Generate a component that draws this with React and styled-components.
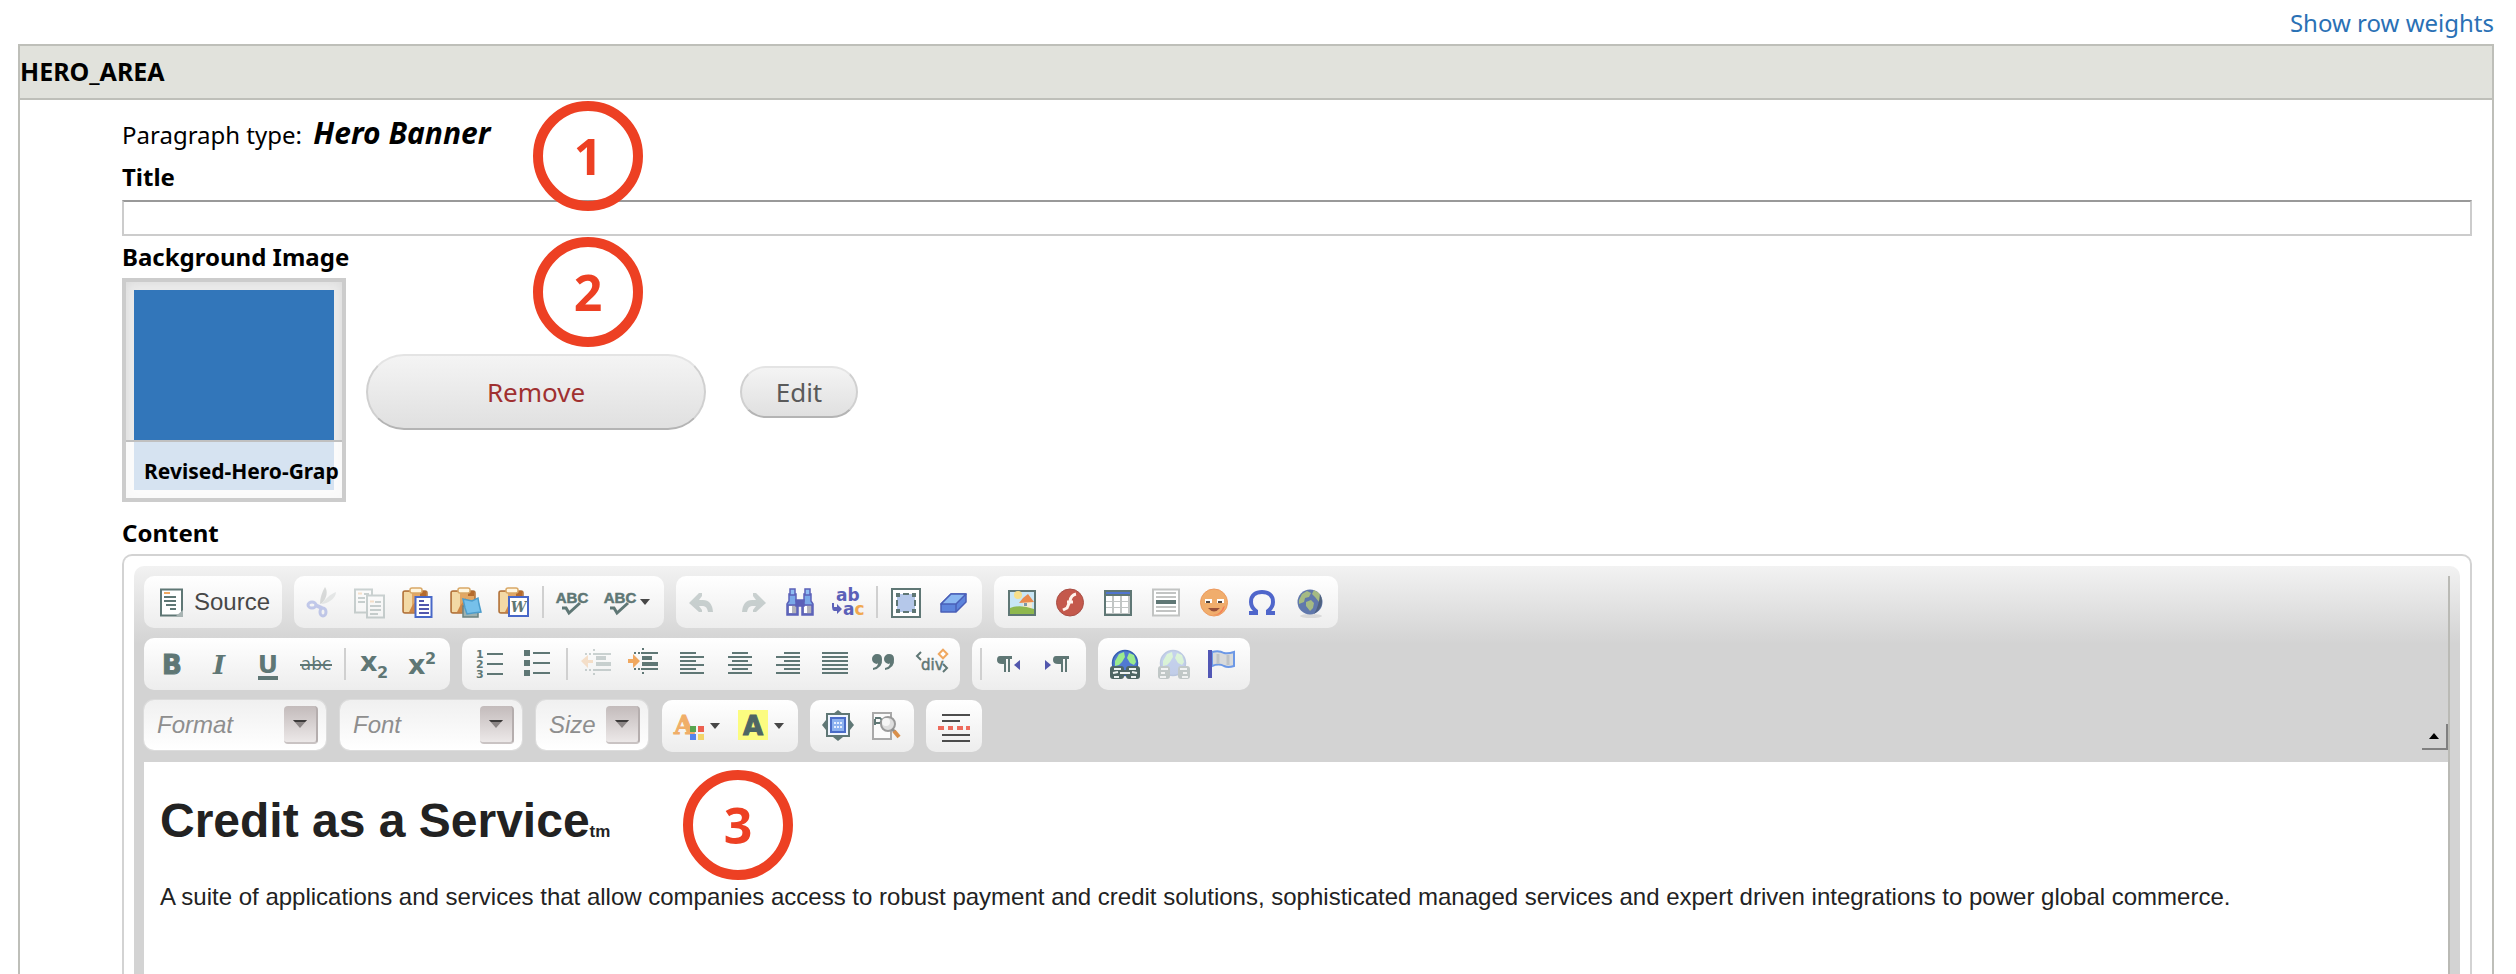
import React from "react";
import styled, { createGlobalStyle } from "styled-components";

const GlobalStyle = createGlobalStyle`
  *, *::before, *::after { box-sizing: border-box; }
  body {
    margin: 0;
    background: #fff;
    color: #000;
    font-family: "Noto Sans", "Open Sans", sans-serif;
    font-size: 24px;
  }
`;

const Page = styled.main`
  display: flex;
  flex-direction: column;
  min-height: 100vh;
  padding: 0 22px 0 18px;
`;

const TopLinks = styled.div`
  display: flex;
  justify-content: flex-end;
  height: 44px;
  line-height: 46px;
`;

const WeightLink = styled.a`
  color: #2a71b5;
  text-decoration: none;
`;

const Panel = styled.section`
  flex: 1;
  display: flex;
  flex-direction: column;
  border: 2px solid #bebfb9;
  border-bottom: 0;
`;

const PanelTitle = styled.h2`
  margin: 0;
  height: 54px;
  border-bottom: 2px solid #bebfb9;
  background: #e1e2dc;
  font-size: 25px;
  line-height: 50px;
`;

const PanelBody = styled.div`
  position: relative;
  flex: 1;
  display: flex;
  flex-direction: column;
  padding: 14px 20px 0 102px;
`;

const TypeLine = styled.div`
  height: 42px;
  line-height: 42px;

  em {
    margin-left: 5px;
    font-size: 30px;
    font-weight: 700;
    line-height: 30px;
  }
`;

const Label = styled.label`
  display: block;
  font-weight: 700;
  line-height: 42px;
`;

const TextInput = styled.input`
  display: block;
  width: 100%;
  height: 36px;
  margin-top: 2px;
  border: 2px solid #ccc;
  border-top-color: #999;
  padding: 0 6px;
  background: #fff;
  font: inherit;
`;

const MediaRow = styled.div`
  display: flex;
  align-items: center;
`;

const Thumbnail = styled.figure`
  display: grid;
  width: 224px;
  height: 224px;
  margin: 0 20px 0 0;
  border: 4px solid #ccc;
  background: #ececec;
  box-shadow: inset 0 0 12px #d8d8d8;
  overflow: hidden;
`;

const ThumbImage = styled.div`
  grid-area: 1 / 1;
  margin: 8px;
  background: #3276ba;
`;

const ThumbCaption = styled.figcaption`
  grid-area: 1 / 1;
  align-self: end;
  height: 58px;
  min-width: 0;
  border-top: 2px solid #c0c0c0;
  padding-left: 18px;
  background: rgba(255, 255, 255, 0.8);
  font-size: 21px;
  font-weight: 700;
  line-height: 58px;
  white-space: nowrap;
  overflow: hidden;
`;

const PillButton = styled.button`
  width: ${(p) => (p.$large ? 340 : 118)}px;
  height: ${(p) => (p.$large ? 76 : 52)}px;
  margin: 4px 34px 0 0;
  border: 2px solid #d0d0d0;
  border-top-color: #e4e4e4;
  border-bottom-color: #b4b4b4;
  border-radius: 38px;
  padding: 0;
  background: linear-gradient(#f4f4f4, #e0e0e0);
  color: ${(p) => (p.$danger ? "#a03030" : "#5a5a5a")};
  font: 26px "Noto Sans", "Open Sans", sans-serif;
`;

const Step = styled.span`
  position: absolute;
  left: ${(p) => p.$left}px;
  top: ${(p) => p.$top}px;
  display: flex;
  align-items: center;
  justify-content: center;
  width: 110px;
  height: 110px;
  border: 10px solid #ed4023;
  border-radius: 50%;
  color: #ed4023;
  font: 700 50px "Open Sans", "Noto Sans", sans-serif;
`;

const ContentField = styled.div`
  flex: 1;
  display: flex;
  flex-direction: column;
  margin-top: 10px;
`;

const EditorFrame = styled.div`
  flex: 1;
  display: flex;
  border: 2px solid #d3d3d3;
  border-bottom: 0;
  border-radius: 10px 10px 0 0;
  padding: 10px 10px 0;
  font-family: "Liberation Sans", Arial, sans-serif;
`;

const EditorSkin = styled.div`
  flex: 1;
  display: flex;
  border-radius: 10px 10px 0 0;
  padding: 10px 10px 0;
  background: linear-gradient(#f2f2f2, #d3d3d3 78px);
`;

const EditorInner = styled.div`
  flex: 1;
  display: flex;
  flex-direction: column;
  border-right: 2px solid #babab5;
`;

const ToolArea = styled.div`
  display: flex;
  justify-content: space-between;
  align-items: flex-end;
  padding-bottom: 10px;
`;

const ToolRows = styled.div`
  display: grid;
  gap: 10px;
`;

const ToolRow = styled.div`
  display: flex;
  gap: 12px;
`;

const ToolGroup = styled.div`
  display: flex;
  align-items: center;
  height: 52px;
  border-radius: 10px;
  padding: 0 4px;
  background: linear-gradient(#fff, #ededed);
`;

const ToolButton = styled.button`
  display: flex;
  align-items: center;
  gap: ${(p) => (p.$labelled ? 6 : 4)}px;
  height: 44px;
  border: 0;
  padding: 0 8px;
  background: none;
  color: #474747;
  font: 24px "Liberation Sans", Arial, sans-serif;
  opacity: ${(p) => (p.disabled ? 0.3 : 1)};

  svg { display: block; overflow: visible; }
`;

const Divider = styled.span`
  width: 2px;
  height: 32px;
  margin: 0 4px;
  background: #d0d0d0;
`;

const Combos = styled.div`
  display: flex;
  gap: 14px;
  margin-right: 2px;
`;

const ComboBox = styled.div`
  display: grid;
  align-items: center;
  width: ${(p) => p.$width}px;
  height: 50px;
  border-radius: 10px;
  background: linear-gradient(#f0f0f0, #fff);
  box-shadow: 0 0 0 1px #dcdcdc;
`;

const ComboSelect = styled.select`
  grid-area: 1 / 1;
  width: 100%;
  height: 50px;
  appearance: none;
  border: 0;
  padding: 0 0 2px 13px;
  background: none;
  color: #8e8e8e;
  font: italic 24px "Liberation Sans", Arial, sans-serif;
`;

const ComboArrow = styled.span`
  grid-area: 1 / 1;
  justify-self: end;
  display: grid;
  place-items: center;
  width: 34px;
  height: 38px;
  margin-right: 8px;
  border-right: 2px solid #b5aeae;
  border-bottom: 2px solid #c9c3c3;
  border-radius: 4px;
  background: linear-gradient(#c3bbbb, #ece8e8);
  pointer-events: none;
`;

const Collapser = styled.button`
  display: grid;
  place-items: center;
  width: 26px;
  height: 26px;
  margin-bottom: 2px;
  border: 0;
  border-right: 2px solid #808080;
  border-bottom: 2px solid #808080;
  padding: 0;
  background: none;
`;

const Document = styled.article`
  position: relative;
  flex: 1;
  padding: 30px 16px 0;
  background: #fff;
  color: #222;
`;

const DocTitle = styled.h1`
  margin: 0;
  font-size: 48px;
  line-height: 58px;

  small { font-size: 17px; }
`;

const DocText = styled.p`
  margin: 18px 0 0;
  font-size: 24px;
  line-height: 36px;
`;

const INK = "#5f7775";
const SERIF = "DejaVu Serif, serif";
const SANS = "DejaVu Sans, sans-serif";

const Clipboard = () => (
  <g>
    <rect x="1" y="5" width="24" height="22" rx="2" fill="#e2a764" stroke="#b0723a" strokeWidth="1.5" />
    <path d="M2 6h8v20H2z" fill="#f3d9a5" />
    <path d="M10 20l6-8v14h-9z" fill="#cf8646" />
    <rect x="18" y="5" width="6" height="5" fill="#b56a2c" />
    <rect x="8" y="2" width="12" height="5" rx="2" fill="#fff6e0" stroke="#d9a866" strokeWidth="1.5" />
  </g>
);

const Caret = () => <path d="M0 0h10l-5 6z" fill="#474747" />;

const Lines = ({ rows, color = INK }) =>
  rows.map(([x1, x2, y, w = 2]) => (
    <rect key={`${x1}-${y}`} x={x1} y={y} width={x2 - x1} height={w} fill={color} />
  ));

const LinkedGlobe = ({ broken }) => (
  <g>
    <circle cx="15" cy="15" r="12.5" fill="#5079d2" stroke="#355fae" strokeWidth="1.5" />
    <path d="M5 13l4-7 5-2 1 5-3 5-3 3-4 1zM19 5l5 2 2 7-2 3-4-2-3-5z" fill="#9bea8e" />
    <rect x="0" y="18" width={broken ? 12 : 14} height="13" rx="3" fill="#4f6664" />
    <rect x={broken ? 20 : 16} y="18" width={broken ? 12 : 14} height="13" rx="3" fill="#4f6664" />
    {!broken && <rect x="8" y="22" width="14" height="5" fill="#4f6664" />}
    <path
      d={broken ? "M3 21h7M3 25h4M2 29h6M22 21h7M25 25h4M24 29h6" : "M4 21h7M19 21h7M3 25l5-1M22 24l5 1M10 25h10M4 29h5M21 29h5"}
      stroke="#eef2f1"
      strokeWidth="2"
    />
  </g>
);

const ICONS = {
  source: (
    <g>
      <rect x="5" y="3.5" width="21" height="26" fill="#fff" stroke={INK} strokeWidth="2" />
      <path d="M27 24v6h-7z" fill="#a8b4b3" />
      <Lines rows={[[8, 20, 10], [8, 20, 14], [10, 20, 18], [14, 20, 22]]} />
      <rect x="8" y="6" width="6" height="2" fill="#f0a860" />
    </g>
  ),
  cut: (
    <g fill="none">
      <path d="M19 1c3 4 2 11-3 16l-2 1c0-6 2-12 5-17z" fill="#8c9290" />
      <path d="M30 6c0 6-8 12-15 12 4-4 9-10 15-12z" fill="#b9c0be" />
      <ellipse cx="6" cy="19" rx="4" ry="3" stroke="#4b63d0" strokeWidth="3" />
      <ellipse cx="17" cy="26" rx="3" ry="4" stroke="#4b63d0" strokeWidth="3" />
      <path d="M9 19l7 3" stroke="#4b63d0" strokeWidth="4" />
    </g>
  ),
  copy: (
    <g fill="#fff" stroke={INK} strokeWidth="2">
      <rect x="1" y="3.5" width="17" height="23" />
      <path d="M4 12h7M4 16h7M10 8h5" />
      <rect x="13" y="9.5" width="17" height="22" />
      <path d="M21 16h6M16 20h11M16 24h11M16 28h8" />
      <path d="M4 7.5h4M16 15.5h4" stroke="#f0a860" />
    </g>
  ),
  paste: (
    <g>
      <Clipboard />
      <rect x="13.5" y="11" width="16" height="20" fill="#fff" stroke="#4868c8" strokeWidth="2" />
      <Lines color="#5257ad" rows={[[17, 22, 14], [17, 27, 18], [17, 27, 22], [17, 27, 26]]} />
    </g>
  ),
  pasteText: (
    <g>
      <Clipboard />
      <path d="M13 20h15v11H13z" fill="#9fb2b0" stroke="#6c8280" strokeWidth="1.5" />
      <path d="M13 13l9 2 6-3 1 6 2 8-8 1-6 1-2-6z" fill="#76c0ea" stroke="#4d9dcc" strokeWidth="1.5" />
    </g>
  ),
  pasteWord: (
    <g>
      <Clipboard />
      <rect x="11" y="11" width="19" height="19" fill="#fff" stroke="#4868c8" strokeWidth="2" />
      <text x="20.5" y="26" textAnchor="middle" fontFamily={SERIF} fontSize="14" fontWeight="700" fontStyle="italic" fill={INK}>W</text>
    </g>
  ),
  spell: (
    <g>
      <text x="16" y="17" textAnchor="middle" fontFamily="Liberation Sans, sans-serif" fontSize="15" fontWeight="700" fill={INK} stroke={INK} strokeWidth="0.5">ABC</text>
      <path d="M6 22h4l3 5L24 17" fill="none" stroke={INK} strokeWidth="3" />
    </g>
  ),
  undo: (
    <path d="M1 17L11 7h3v3l-3 4h4q9 0 10 12h-5q-1-6-5-6h-4l3 4v2h-3z" fill={INK} />
  ),
  redo: (
    <path d="M30 17L20 7h-3v3l3 4h-4Q7 14 6 26h5q1-6 5-6h4l-3 4v2h3z" fill={INK} />
  ),
  find: (
    <g stroke="#5b60b8" strokeWidth="1.5">
      <path d="M5 8h7v7l2 3v11H3V18l2-3zM20 8h7v7l2 3v11H18V18l2-3z" fill="#7aa8e8" />
      <path d="M4 19h9v9H4zM19 19h9v9h-9z" fill="#b4b4bd" />
      <path d="M5 20h3v7H5zM20 20h3v7h-3z" fill="#fff" stroke="none" />
      <rect x="6" y="3" width="5" height="6" fill="#8fbcf2" />
      <rect x="21" y="3" width="5" height="6" fill="#8fbcf2" />
      <rect x="12" y="14" width="8" height="6" fill="#5b60b8" />
    </g>
  ),
  replace: (
    <g fontFamily={SANS} fontSize="17" fontWeight="700" fill="#5b60b8">
      <text x="4" y="15">ab</text>
      <text x="11" y="29">a<tspan fill="#f0a850">c</tspan></text>
      <path d="M0 17h2v4h3v-3l5 5-5 5v-3H2q-2-1-2-4z" />
    </g>
  ),
  selectAll: (
    <g>
      <rect x="2" y="3" width="28" height="28" fill="#fff" stroke={INK} strokeWidth="2" />
      <rect x="7" y="8" width="18" height="18" fill="#b5c8ea" />
      <path d="M6 7h4v4H6zM22 7h4v4h-4zM6 23h4v4H6zM22 23h4v4h-4zM13 7h6v2h-6zM13 25h6v2h-6zM6 14h2v6H6zM24 14h2v6h-2z" fill={INK} />
    </g>
  ),
  eraser: (
    <g stroke="#4a5fb8" strokeWidth="1.5" strokeLinejoin="round">
      <path d="M3 18L13 8h15v8L18 26H3z" fill="#5d84dc" />
      <path d="M3 18L13 8h15L18 18z" fill="#8bb8f2" />
      <path d="M18 18v8" />
    </g>
  ),
  image: (
    <g>
      <rect x="3" y="5" width="26" height="24" fill="#c8e6f5" stroke={INK} strokeWidth="2" />
      <circle cx="12" cy="9" r="4" fill="#f7e08a" />
      <rect x="17" y="16" width="9" height="7" fill="#f5ead0" />
      <path d="M13 17l4-5 5-4 6 8z" fill="#e9894c" />
      <path d="M4 22q10-4 24 1v5H4z" fill="#8fb84e" />
      <rect x="18" y="17" width="3" height="3" fill="#7d97a8" />
    </g>
  ),
  flash: (
    <g>
      <circle cx="16" cy="16.5" r="13.5" fill="#c4594c" stroke="#a84d44" />
      <path d="M22 8q-5 1-6 7l-3 7-4 2M13 16h6" fill="none" stroke="#fff3ec" strokeWidth="3" />
    </g>
  ),
  table: (
    <g>
      <rect x="2" y="4" width="28" height="26" fill={INK} />
      <rect x="4" y="6" width="24" height="2" fill="#5075d0" />
      <rect x="4" y="10" width="24" height="18" fill="#c2c6c5" />
      {[10, 16, 22].map((y) =>
        [4, 12, 20].map((x) => <rect key={`${x}-${y}`} x={x} y={y} width="6" height="5" fill="#fff" />)
      )}
    </g>
  ),
  rule: (
    <g>
      <rect x="3" y="3.5" width="26" height="26" fill="#fff" stroke="#c2c4c3" strokeWidth="2" />
      <Lines color="#c2c4c3" rows={[[6, 26, 6], [6, 26, 10], [6, 26, 20], [6, 26, 24]]} />
      <rect x="6" y="14" width="20" height="4" fill={INK} />
    </g>
  ),
  smiley: (
    <g>
      <circle cx="16" cy="16.5" r="13.5" fill="#f0ad6c" stroke="#ed9a5e" />
      <path d="M27 20q-3 10-12 9 8-1 10-8z" fill="#f57c58" />
      <path d="M7 13h7v4H7zM19 13h7v4h-7z" fill="#fff" />
      <path d="M8 15h4v2H8zM20 15h4v2h-4z" fill="#4d4340" />
      <path d="M10 22q6 7 12 0z" fill="#98503a" />
    </g>
  ),
  omega: (
    <path d="M3 27h7v-2C6 22 5 19 5 16 5 9 10 6 16 6s11 3 11 10c0 3-1 6-5 9v2h7" fill="none" stroke="#4f66cb" strokeWidth="4" />
  ),
  globe: (
    <g>
      <ellipse cx="17" cy="30" rx="11" ry="2" fill="#d9d9d9" />
      <circle cx="16" cy="16" r="12.5" fill="#6078ac" />
      <path d="M8 8l5-3 4 2-2 4-4 1-1 4-5 2 0-4zM20 4l5 3 3 7-3 2-4-5-3-3zM12 16l5-2 3 3-1 5-3 3-4-5z" fill="#a5ba83" />
      <path d="M26 8q6 12-6 20 5-8 6-20z" fill="#4f6180" />
    </g>
  ),
  bold: (
    <text x="16" y="26" textAnchor="middle" fontFamily={SANS} fontSize="26" fontWeight="700" fill={INK} stroke={INK}>B</text>
  ),
  italic: (
    <text x="15" y="26" textAnchor="middle" fontFamily={SERIF} fontSize="26" fontWeight="700" fontStyle="italic" fill={INK}>I</text>
  ),
  underline: (
    <g fill={INK}>
      <text x="16" y="25" textAnchor="middle" fontFamily={SANS} fontSize="25" fontWeight="700">U</text>
      <rect x="6" y="28" width="20" height="4" />
    </g>
  ),
  strike: (
    <g fill={INK}>
      <text x="16" y="22" textAnchor="middle" fontFamily={SANS} fontSize="17">abc</text>
      <rect x="0" y="16" width="32" height="2" />
    </g>
  ),
  sub: (
    <g fill={INK} fontFamily={SANS} fontWeight="700">
      <text x="2" y="23" fontSize="27">x</text>
      <text x="19" y="30" fontSize="16">2</text>
    </g>
  ),
  sup: (
    <g fill={INK} fontFamily={SANS} fontWeight="700">
      <text x="2" y="26" fontSize="27">x</text>
      <text x="19" y="16" fontSize="16">2</text>
    </g>
  ),
  numbered: (
    <g fill={INK}>
      <Lines rows={[[13, 29, 5], [13, 29, 15], [13, 29, 25]]} />
      <g fontFamily={SANS} fontSize="11" fontWeight="700">
        <text x="2" y="10">1</text>
        <text x="2" y="20">2</text>
        <text x="2" y="30">3</text>
      </g>
    </g>
  ),
  bulleted: (
    <g fill={INK}>
      <path d="M2 2h6v6H2zM2 12h6v6H2zM2 22h6v6H2z" />
      <Lines rows={[[11, 28, 4], [11, 28, 14], [11, 28, 24]]} />
    </g>
  ),
  outdent: (
    <g>
      <Lines rows={[[5, 7, 5], [9, 11, 5], [13, 31, 5], [16, 26, 8, 4], [16, 31, 14, 4], [5, 7, 21], [9, 11, 21], [13, 31, 21], [13, 15, 1], [13, 15, 25]]} />
      <path d="M1 13l7-6v5h5v3H8v5z" fill="#f0a860" />
    </g>
  ),
  indent: (
    <g>
      <Lines rows={[[6, 8, 4], [10, 12, 4], [13, 30, 4], [14, 24, 8, 4], [14, 30, 14, 4], [6, 8, 20], [10, 12, 20], [13, 30, 20], [14, 16, 0], [14, 16, 24]]} />
      <path d="M12 13L5 6v5H0v4h5v5z" fill="#f0a860" />
    </g>
  ),
  left: <Lines rows={[[4, 20, 4], [4, 28, 8], [4, 20, 12], [4, 28, 16], [4, 20, 20], [4, 28, 24]]} />,
  center: <Lines rows={[[8, 24, 4], [4, 28, 8], [8, 24, 12], [4, 28, 16], [8, 24, 20], [4, 28, 24]]} />,
  right: <Lines rows={[[12, 28, 4], [4, 28, 8], [12, 28, 12], [4, 28, 16], [12, 28, 20], [4, 28, 24]]} />,
  justify: <Lines rows={[[2, 28, 4], [2, 28, 8], [2, 28, 12], [2, 28, 16], [2, 28, 20], [2, 28, 24]]} />,
  quote: (
    <path d="M9 6a5 5 0 1 0 0 10l1-1q0 4-5 5v2q10-2 9-11 0-5-5-5zM21 6a5 5 0 1 0 0 10l1-1q0 4-5 5v2q10-2 9-11 0-5-5-5z" fill={INK} />
  ),
  div: (
    <g>
      <path d="M5 4L1 8l4 4M27 16l4 4-4 4" fill="none" stroke={INK} strokeWidth="2" />
      <text x="5" y="22" fontFamily={SANS} fontSize="15" fill={INK} stroke={INK} strokeWidth="0.5">div</text>
      <rect x="24" y="3" width="6" height="6" transform="rotate(45 27 6)" fill="#fff" stroke="#f0a860" strokeWidth="2" />
    </g>
  ),
  ltr: (
    <g>
      <path d="M6 8h12v3h-2v13h-2V11h-2v13h-2v-8H8q-5 0-5-4t3-4z" fill={INK} />
      <path d="M26 12v10l-6-5z" fill="#5257ad" />
    </g>
  ),
  rtl: (
    <g>
      <path d="M14 8h13v3h-2v13h-2V11h-2v13h-2v-8h-3q-5 0-5-4t3-4z" fill={INK} />
      <path d="M3 12v10l6-5z" fill="#5257ad" />
    </g>
  ),
  link: <LinkedGlobe />,
  unlink: <LinkedGlobe broken />,
  anchor: (
    <g>
      <path d="M6 4q7-2 12 1 4 1 10-1v14q-6 2-10 0-5-3-12 0z" fill="#d8dadb" stroke="#6c98e6" strokeWidth="2" />
      <path d="M12 6v10M22 7v10" stroke="#bfc3c6" strokeWidth="3" />
      <rect x="2" y="2" width="4" height="28" fill="#5257b5" />
    </g>
  ),
  textColor: (
    <g>
      <text x="10" y="24" textAnchor="middle" fontFamily={SERIF} fontSize="26" fontWeight="700" fill="#f0ae68" stroke="#f0ae68">A</text>
      <rect x="16" y="16" width="6" height="6" fill="#58a550" />
      <rect x="24" y="16" width="6" height="6" fill="#ec6050" />
      <rect x="16" y="24" width="6" height="6" fill="#5584ec" />
      <rect x="24" y="24" width="6" height="6" fill="#f2d56a" />
    </g>
  ),
  highlight: (
    <g>
      <rect x="0" y="0" width="30" height="30" fill="#fcfc80" />
      <text x="15" y="25" textAnchor="middle" fontFamily={SANS} fontSize="26" fontWeight="700" fill="#4e6664" stroke="#4e6664">A</text>
    </g>
  ),
  maximize: (
    <g>
      <path d="M16 0l5 4H11zM16 31l5-4H11zM0 15l4-5v10zM32 15l-4-5v10z" fill={INK} />
      <rect x="5" y="4" width="22" height="22" fill="#eef4ff" stroke={INK} strokeWidth="2" />
      <rect x="9" y="8" width="14" height="14" fill="#8db2f0" stroke="#4a6cc8" strokeWidth="2" />
      <path d="M12 12h2v2h-2zM15 12h2v2h-2zM18 12h2v2h-2zM12 16h2v2h-2zM15 16h2v2h-2zM18 16h2v2h-2z" fill="#e4eeff" />
    </g>
  ),
  preview: (
    <g>
      <rect x="3" y="3" width="18" height="26" fill="#fbfbfb" stroke="#a9a9a9" strokeWidth="2" />
      <path d="M5 9v6M5 8h5q3 2 0 5H6" fill="none" stroke={INK} strokeWidth="2" />
      <circle cx="18" cy="14" r="7" fill="#dedede" stroke="#9a9a9a" strokeWidth="2" />
      <circle cx="16" cy="12" r="4" fill="#f6f6f6" />
      <path d="M22 19l3 3" stroke="#8f8f8f" strokeWidth="3" />
      <path d="M24 21l5 6" stroke="#d98f4a" strokeWidth="4" />
    </g>
  ),
  pageBreak: (
    <g>
      <Lines color="#4c4c4c" rows={[[4, 32, 4], [4, 22, 10], [4, 32, 24], [4, 32, 30]]} />
      <Lines color="#ee6a5c" rows={[[0, 6, 16, 4], [10, 15, 16, 4], [19, 25, 16, 4], [28, 32, 16, 4]]} />
    </g>
  ),
};

const TOP_ROW = [
  [["source", "Source", { text: true }]],
  [
    ["cut", "Cut", { off: true }],
    ["copy", "Copy", { off: true }],
    ["paste", "Paste"],
    ["pasteText", "Paste as plain text"],
    ["pasteWord", "Paste from Word"],
    null,
    ["spell", "Check spelling"],
    ["spell", "Spell check as you type", { menu: true }],
  ],
  [
    ["undo", "Undo", { off: true }],
    ["redo", "Redo", { off: true }],
    ["find", "Find"],
    ["replace", "Replace"],
    null,
    ["selectAll", "Select all"],
    ["eraser", "Remove format"],
  ],
  [
    ["image", "Image"],
    ["flash", "Flash"],
    ["table", "Table"],
    ["rule", "Horizontal line"],
    ["smiley", "Smiley"],
    ["omega", "Special character"],
    ["globe", "IFrame"],
  ],
];

const MIDDLE_ROW = [
  [
    ["bold", "Bold"],
    ["italic", "Italic"],
    ["underline", "Underline"],
    ["strike", "Strike through"],
    null,
    ["sub", "Subscript"],
    ["sup", "Superscript"],
  ],
  [
    ["numbered", "Numbered list"],
    ["bulleted", "Bulleted list"],
    null,
    ["outdent", "Decrease indent", { off: true }],
    ["indent", "Increase indent"],
    ["left", "Align left"],
    ["center", "Center"],
    ["right", "Align right"],
    ["justify", "Justify"],
    ["quote", "Block quote"],
    ["div", "Create div container"],
  ],
  [null, ["ltr", "Left to right"], ["rtl", "Right to left"]],
  [
    ["link", "Link"],
    ["unlink", "Unlink", { off: true }],
    ["anchor", "Anchor"],
  ],
];

const BOTTOM_ROW = [
  [
    ["textColor", "Text color", { menu: true }],
    ["highlight", "Background color", { menu: true }],
  ],
  [
    ["maximize", "Maximize"],
    ["preview", "Show blocks"],
  ],
  [["pageBreak", "Insert page break"]],
];

const COMBOS = [
  ["Format", 182],
  ["Font", 182],
  ["Size", 112],
];

function Tool({ icon, label, text, menu, off }) {
  return (
    <ToolButton type="button" aria-label={label} disabled={off} $labelled={text}>
      <svg width="32" height="32" viewBox="0 0 32 32" aria-hidden="true">
        {ICONS[icon]}
      </svg>
      {text && label}
      {menu && (
        <svg width="12" height="6" viewBox="0 0 12 6" aria-hidden="true">
          <Caret />
        </svg>
      )}
    </ToolButton>
  );
}

const Groups = ({ groups }) =>
  groups.map((group, g) => (
    <ToolGroup key={g}>
      {group.map((item, i) =>
        item ? <Tool key={i} icon={item[0]} label={item[1]} {...item[2]} /> : <Divider key={i} />
      )}
    </ToolGroup>
  ));

function Combo({ label, width }) {
  return (
    <ComboBox $width={width}>
      <ComboSelect aria-label={label} defaultValue="">
        <option value="">{label}</option>
      </ComboSelect>
      <ComboArrow>
        <svg width="14" height="8" viewBox="0 0 14 8" aria-hidden="true">
          <path d="M0 0h14L7 8z" fill="#8a8484" />
          <path d="M0 0h14l-2 2H2z" fill="#3c3a3a" />
        </svg>
      </ComboArrow>
    </ComboBox>
  );
}

export default function App() {
  return (
    <>
      <GlobalStyle />
      <Page>
        <TopLinks>
          <WeightLink href="#weights">Show row weights</WeightLink>
        </TopLinks>
        <Panel>
          <PanelTitle>HERO_AREA</PanelTitle>
          <PanelBody>
            <TypeLine>
              Paragraph type: <em>Hero Banner</em>
            </TypeLine>
            <Label htmlFor="hero-title">Title</Label>
            <TextInput id="hero-title" type="text" />
            <Label as="div">Background Image</Label>
            <MediaRow>
              <Thumbnail>
                <ThumbImage />
                <ThumbCaption>Revised-Hero-Grap</ThumbCaption>
              </Thumbnail>
              <PillButton type="button" $large $danger>Remove</PillButton>
              <PillButton type="button">Edit</PillButton>
            </MediaRow>
            <Step $left={513} $top={1}>1</Step>
            <Step $left={513} $top={137}>2</Step>
            <ContentField>
              <Label as="div">Content</Label>
              <EditorFrame>
                <EditorSkin>
                  <EditorInner>
                    <ToolArea>
                      <ToolRows>
                        <ToolRow><Groups groups={TOP_ROW} /></ToolRow>
                        <ToolRow><Groups groups={MIDDLE_ROW} /></ToolRow>
                        <ToolRow>
                          <Combos>
                            {COMBOS.map(([label, width]) => (
                              <Combo key={label} label={label} width={width} />
                            ))}
                          </Combos>
                          <Groups groups={BOTTOM_ROW} />
                        </ToolRow>
                      </ToolRows>
                      <Collapser type="button" aria-label="Collapse toolbar">
                        <svg width="10" height="6" viewBox="0 0 10 6" aria-hidden="true">
                          <path d="M5 0l5 6H0z" fill="#000" />
                        </svg>
                      </Collapser>
                    </ToolArea>
                    <Document>
                      <DocTitle>
                        Credit as a Service<small>tm</small>
                      </DocTitle>
                      <DocText>
                        A suite of applications and services that allow companies access to robust payment and credit
                        solutions, sophisticated managed services and expert driven integrations to power global commerce.
                      </DocText>
                      <Step $left={539} $top={8}>3</Step>
                    </Document>
                  </EditorInner>
                </EditorSkin>
              </EditorFrame>
            </ContentField>
          </PanelBody>
        </Panel>
      </Page>
    </>
  );
}
